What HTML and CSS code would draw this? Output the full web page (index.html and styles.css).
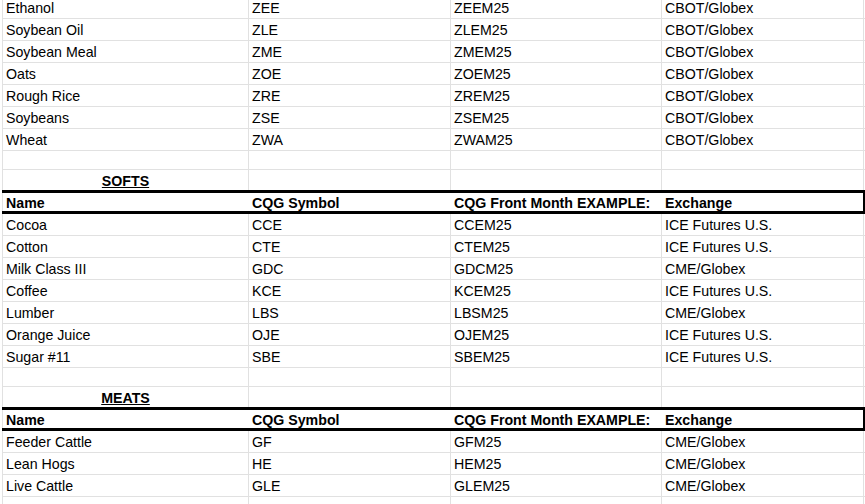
FILE: index.html
```html
<!DOCTYPE html>
<html>
<head>
<meta charset="utf-8">
<link rel="stylesheet" href="styles.css">
</head>
<body>
<div class="sheet">
  <div class="row"><div class="c">Ethanol</div><div class="c">ZEE</div><div class="c">ZEEM25</div><div class="c">CBOT/Globex</div></div>
  <div class="row"><div class="c">Soybean Oil</div><div class="c">ZLE</div><div class="c">ZLEM25</div><div class="c">CBOT/Globex</div></div>
  <div class="row"><div class="c">Soybean Meal</div><div class="c">ZME</div><div class="c">ZMEM25</div><div class="c">CBOT/Globex</div></div>
  <div class="row"><div class="c">Oats</div><div class="c">ZOE</div><div class="c">ZOEM25</div><div class="c">CBOT/Globex</div></div>
  <div class="row"><div class="c">Rough Rice</div><div class="c">ZRE</div><div class="c">ZREM25</div><div class="c">CBOT/Globex</div></div>
  <div class="row"><div class="c">Soybeans</div><div class="c">ZSE</div><div class="c">ZSEM25</div><div class="c">CBOT/Globex</div></div>
  <div class="row"><div class="c">Wheat</div><div class="c">ZWA</div><div class="c">ZWAM25</div><div class="c">CBOT/Globex</div></div>
  <div class="row empty"><div class="c"></div><div class="c"></div><div class="c"></div><div class="c"></div></div>
  <div class="row title"><div class="c"><span class="sect">SOFTS</span></div><div class="c"></div><div class="c"></div><div class="c"></div></div>
  <div class="row head"><div class="c">Name</div><div class="c">CQG Symbol</div><div class="c">CQG Front Month EXAMPLE:</div><div class="c">Exchange</div></div>
  <div class="row"><div class="c">Cocoa</div><div class="c">CCE</div><div class="c">CCEM25</div><div class="c">ICE Futures U.S.</div></div>
  <div class="row"><div class="c">Cotton</div><div class="c">CTE</div><div class="c">CTEM25</div><div class="c">ICE Futures U.S.</div></div>
  <div class="row"><div class="c">Milk Class III</div><div class="c">GDC</div><div class="c">GDCM25</div><div class="c">CME/Globex</div></div>
  <div class="row"><div class="c">Coffee</div><div class="c">KCE</div><div class="c">KCEM25</div><div class="c">ICE Futures U.S.</div></div>
  <div class="row"><div class="c">Lumber</div><div class="c">LBS</div><div class="c">LBSM25</div><div class="c">CME/Globex</div></div>
  <div class="row"><div class="c">Orange Juice</div><div class="c">OJE</div><div class="c">OJEM25</div><div class="c">ICE Futures U.S.</div></div>
  <div class="row"><div class="c">Sugar #11</div><div class="c">SBE</div><div class="c">SBEM25</div><div class="c">ICE Futures U.S.</div></div>
  <div class="row empty"><div class="c"></div><div class="c"></div><div class="c"></div><div class="c"></div></div>
  <div class="row title"><div class="c"><span class="sect">MEATS</span></div><div class="c"></div><div class="c"></div><div class="c"></div></div>
  <div class="row head"><div class="c">Name</div><div class="c">CQG Symbol</div><div class="c">CQG Front Month EXAMPLE:</div><div class="c">Exchange</div></div>
  <div class="row"><div class="c">Feeder Cattle</div><div class="c">GF</div><div class="c">GFM25</div><div class="c">CME/Globex</div></div>
  <div class="row"><div class="c">Lean Hogs</div><div class="c">HE</div><div class="c">HEM25</div><div class="c">CME/Globex</div></div>
  <div class="row"><div class="c">Live Cattle</div><div class="c">GLE</div><div class="c">GLEM25</div><div class="c">CME/Globex</div></div>
  <div class="row"><div class="c"></div><div class="c"></div><div class="c"></div><div class="c"></div></div>
</div>
</body>
</html>
```
FILE: styles.css
```css
html, body {
  margin: 0;
  padding: 0;
  background: #ffffff;
  overflow: hidden;
}
body {
  font-family: "Liberation Sans", Arial, sans-serif;
  font-size: 14.2px;
  color: #000000;
}
.sheet {
  margin-top: -3px;
  margin-left: 2px;
  width: 862px;
  border-left: 1px solid #e1e1e1;
}
.row {
  display: grid;
  grid-template-columns: 246px 202px 211px 202px;
  height: 22px;
  box-sizing: border-box;
  border-bottom: 1px solid #e1e1e1;
}
.c {
  border-right: 1px solid #e1e1e1;
  padding-left: 3px;
  display: flex;
  align-items: center;
  white-space: nowrap;
  overflow: hidden;
  line-height: 16px;
}
.row.empty {
  height: 19px;
}
.row.title {
  height: 20px;
  border-bottom: none;
}
.row.title .c {
  padding-top: 2px;
}
.row.title .c:first-child {
  justify-content: center;
  padding-left: 0;
}
.sect {
  font-weight: bold;
  text-decoration: underline;
}
.row.head {
  height: 24px;
  border-top: 3px solid #000000;
  border-bottom: 3px solid #000000;
  border-right: 3px solid #000000;
  margin-left: -1px;
  width: 864px;
  grid-template-columns: 247px 202px 211px 201px;
  font-weight: bold;
}
.row.head .c {
  border-right: none;
  padding-top: 2px;
}
.row.head .c:first-child {
  padding-left: 4px;
}
```
